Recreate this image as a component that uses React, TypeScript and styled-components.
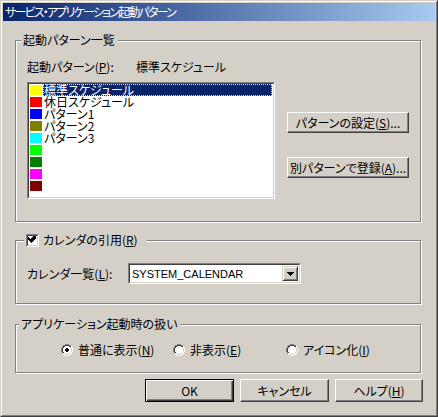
import React from 'react';
import styled, { createGlobalStyle } from 'styled-components';

const GlobalStyle = createGlobalStyle`
  html, body {
    margin: 0;
    padding: 0;
    background: #d4d0c8;
  }
  body {
    font-family: "Noto Sans CJK JP", "Noto Sans", sans-serif;
    font-size: 12px;
    font-feature-settings: "palt";
    color: #000;
  }
`;

const Frame = styled.div`
  width: 438px;
  height: 417px;
  box-sizing: border-box;
  border: 1px solid;
  border-color: #d4d0c8 #404040 #404040 #d4d0c8;
`;

const FrameInner = styled.div`
  height: 100%;
  box-sizing: border-box;
  border: 1px solid;
  border-color: #fff #808080 #808080 #fff;
  padding: 1px;
  display: flex;
  flex-direction: column;
`;

const TitleBar = styled.div`
  height: 18px;
  display: flex;
  align-items: center;
  padding-left: 2px;
  background: linear-gradient(to right, #0a246a, #a6caf0);
  color: #fff;
  line-height: 14px;
  letter-spacing: -1.8px;
`;

const Body = styled.div`
  flex: 1;
  display: flex;
  flex-direction: column;
  padding: 0 12px;
`;

const Group = styled.div<{ $top: number; $height: number }>`
  position: relative;
  margin-top: ${({ $top }) => $top}px;
  margin-right: 2px;
  height: ${({ $height }) => $height}px;
  box-sizing: border-box;
  border: 1px solid #808080;
  box-shadow: inset 1px 1px 0 #fff, 1px 1px 0 #fff;
`;

const Legend = styled.div<{ $left: number; $padRight?: number }>`
  position: absolute;
  top: -8px;
  left: ${({ $left }) => $left}px;
  padding: 0 ${({ $padRight }) => $padRight ?? 3}px 0 2px;
  background: #d4d0c8;
  line-height: 14px;
  display: flex;
  align-items: center;
  gap: 4px;
`;

const LabelRow = styled.div`
  display: flex;
  padding: 19px 0 0 11px;
  line-height: 14px;
  height: 14px;
`;

const LabelName = styled.span`
  width: 109px;
`;

const ListArea = styled.div`
  display: flex;
  padding: 8px 0 0 11px;
  gap: 12px;
`;

const Sunken = styled.div`
  border: 1px solid;
  border-color: #808080 #fff #fff #808080;
  box-sizing: border-box;
`;

const SunkenInner = styled.div`
  border: 1px solid;
  border-color: #404040 #d4d0c8 #d4d0c8 #404040;
  height: 100%;
  box-sizing: border-box;
  background: #fff;
`;

const ListBox = styled(Sunken)`
  width: 248px;
  height: 117px;
`;

const ListItem = styled.div`
  display: flex;
  align-items: center;
  height: 12px;
  padding-left: 1px;
`;

const Swatch = styled.span<{ $color: string }>`
  width: 12px;
  height: 10px;
  margin-right: 1px;
  background: ${({ $color }) => $color};
  flex: none;
`;

const ItemText = styled.span<{ $selected?: boolean }>`
  flex: 1;
  height: 12px;
  line-height: 12px;
  padding-left: 1px;
  margin-right: 1px;
  box-sizing: border-box;
  white-space: nowrap;
  color: ${({ $selected }) => ($selected ? '#fff' : '#000')};
  background: ${({ $selected }) => ($selected ? '#0a246a' : 'transparent')};
  outline: ${({ $selected }) => ($selected ? '1px dotted #f0e8a0' : 'none')};
  outline-offset: -1px;
`;

const SideButtons = styled.div`
  display: flex;
  flex-direction: column;
  gap: 24px;
  padding-top: 30px;
`;

const Button = styled.button<{ $width: number; $height: number; $default?: boolean }>`
  width: ${({ $width }) => $width}px;
  height: ${({ $height }) => $height}px;
  padding: 0;
  margin: 0;
  font: inherit;
  font-feature-settings: "palt";
  line-height: 14px;
  color: #000;
  background: #d4d0c8;
  border: 1px solid;
  border-color: ${({ $default }) => ($default ? '#000' : '#fff #404040 #404040 #fff')};
  box-shadow: ${({ $default }) =>
    $default
      ? 'inset 1px 1px 0 #fff, inset -1px -1px 0 #404040, inset -2px -2px 0 #808080'
      : 'inset -1px -1px 0 #808080'};
  display: flex;
  align-items: center;
  justify-content: center;
`;

const Check = styled.span`
  width: 13px;
  height: 13px;
  box-sizing: border-box;
  border: 1px solid;
  border-color: #808080 #fff #fff #808080;
  display: inline-block;
`;

const CheckInner = styled.span`
  display: block;
  width: 100%;
  height: 100%;
  box-sizing: border-box;
  border: 1px solid;
  border-color: #404040 #d4d0c8 #d4d0c8 #404040;
  background: #fff;
`;

const ComboRow = styled.div`
  display: flex;
  align-items: center;
  padding: 22px 0 0 11px;
`;

const ComboLabel = styled.span`
  width: 101px;
  line-height: 14px;
`;

const Combo = styled(Sunken)`
  width: 173px;
  height: 21px;
`;

const ComboInner = styled(SunkenInner)`
  display: flex;
  align-items: center;
  justify-content: space-between;
  padding: 1px;
`;

const ComboText = styled.span`
  font-family: "Liberation Sans", Arial, sans-serif;
  font-size: 11px;
  padding-left: 1px;
  line-height: 14px;
`;

const ArrowButton = styled.span`
  width: 16px;
  height: 15px;
  box-sizing: border-box;
  border: 1px solid;
  border-color: #d4d0c8 #404040 #404040 #d4d0c8;
  box-shadow: inset 1px 1px 0 #fff, inset -1px -1px 0 #808080;
  background: #d4d0c8;
  display: flex;
  align-items: center;
  justify-content: center;
`;

const RadioRow = styled.div`
  display: grid;
  grid-template-columns: 112px 113px auto;
  padding: 18px 0 0 45px;
`;

const RadioItem = styled.label`
  display: flex;
  align-items: center;
  gap: 5px;
  line-height: 14px;
`;

const Radio = styled.span`
  width: 12px;
  height: 12px;
  flex: none;
`;

const ButtonRow = styled.div`
  display: flex;
  justify-content: flex-end;
  gap: 6px;
  margin-top: 6px;
`;

const Mn: React.FC<React.PropsWithChildren> = ({ children }) => <u>{children}</u>;

const RadioIcon: React.FC<{ checked?: boolean }> = ({ checked }) => (
  <Radio>
    <svg width="12" height="12" viewBox="0 0 12 12" shapeRendering="crispEdges">
      <path d="M4 0h4v1h2v1h1v2h1v4h-1v2h-1v1h-2v1h-4v-1h-2v-1h-1v-2h-1v-4h1v-2h1v-1h2z" fill="#fff" />
      <path d="M4 0h4v1h-4zM2 1h2v1h-2zM8 1h2v1h-2zM1 2h1v2h-1zM0 4h1v4h-1zM1 8h1v2h-1z" fill="#808080" />
      <path d="M4 1h4v1h-4zM2 2h2v1h-2zM8 2h2v1h-2zM2 3h1v1h-1zM1 4h1v4h-1zM2 8h1v1h-1z" fill="#404040" />
      <path d="M10 2h1v2h-1zM11 4h1v4h-1zM10 8h1v2h-1zM8 10h2v1h-2zM2 10h2v1h-2zM4 11h4v1h-4z" fill="#fff" />
      <path d="M9 3h1v1h-1zM10 4h1v4h-1zM9 8h1v1h-1zM8 9h1v1h-1zM3 9h1v1h-1zM4 10h4v1h-4z" fill="#d4d0c8" />
      {checked && <path d="M5 4h2v1h1v2h-1v1h-2v-1h-1v-2h1z" fill="#000" />}
    </svg>
  </Radio>
);

const patterns: { color: string; name: string }[] = [
  { color: '#ffff00', name: '標準スケジュール' },
  { color: '#ff0000', name: '休日スケジュール' },
  { color: '#0000ff', name: 'パターン1' },
  { color: '#808000', name: 'パターン2' },
  { color: '#00ffff', name: 'パターン3' },
  { color: '#00ff00', name: '' },
  { color: '#008000', name: '' },
  { color: '#ff00ff', name: '' },
  { color: '#800000', name: '' },
];

export default function App() {
  return (
    <>
      <GlobalStyle />
      <Frame>
        <FrameInner>
          <TitleBar>サービス・アプリケーション起動パターン</TitleBar>
          <Body>
            <Group $top={19} $height={182}>
              <Legend $left={5}>起動パターン一覧</Legend>
              <LabelRow>
                <LabelName>
                  起動パターン(<Mn>P</Mn>):
                </LabelName>
                <span>標準スケジュール</span>
              </LabelRow>
              <ListArea>
                <ListBox>
                  <SunkenInner>
                    {patterns.map((p, i) => (
                      <ListItem key={i}>
                        <Swatch $color={p.color} />
                        {p.name ? <ItemText $selected={i === 0}>{p.name}</ItemText> : null}
                      </ListItem>
                    ))}
                  </SunkenInner>
                </ListBox>
                <SideButtons>
                  <Button $width={122} $height={21}>
                    パターンの設定(<Mn>S</Mn>)...
                  </Button>
                  <Button $width={122} $height={21}>
                    別パターンで登録(<Mn>A</Mn>)...
                  </Button>
                </SideButtons>
              </ListArea>
            </Group>

            <Group $top={18} $height={64}>
              <Legend $left={8} $padRight={9}>
                <Check>
                  <CheckInner>
                    <svg width="9" height="9" viewBox="0 0 9 9" shapeRendering="crispEdges" style={{ display: 'block' }}>
                      <path d="M7 1h1v3h-1v1h-1v1h-1v1h-1v1h-1v-1h-1v-1h-1v-1h-1v-3h1v1h1v1h1v-1h1v-1h1v-1h1z" fill="#000" transform="translate(0,-1)" />
                    </svg>
                  </CheckInner>
                </Check>
                <span>
                  カレンダの引用(<Mn>R</Mn>)
                </span>
              </Legend>
              <ComboRow>
                <ComboLabel>
                  カレンダ一覧(<Mn>L</Mn>):
                </ComboLabel>
                <Combo>
                  <ComboInner>
                    <ComboText>SYSTEM_CALENDAR</ComboText>
                    <ArrowButton>
                      <svg width="7" height="4" viewBox="0 0 7 4" shapeRendering="crispEdges">
                        <path d="M0 0h7v1h-1v1h-1v1h-1v1h-1v-1h-1v-1h-1v-1h-1z" fill="#000" />
                      </svg>
                    </ArrowButton>
                  </ComboInner>
                </Combo>
              </ComboRow>
            </Group>

            <Group $top={20} $height={49}>
              <Legend $left={3}>アプリケーション起動時の扱い</Legend>
              <RadioRow>
                <RadioItem>
                  <RadioIcon checked />
                  <span>
                    普通に表示(<Mn>N</Mn>)
                  </span>
                </RadioItem>
                <RadioItem>
                  <RadioIcon />
                  <span>
                    非表示(<Mn>E</Mn>)
                  </span>
                </RadioItem>
                <RadioItem>
                  <RadioIcon />
                  <span>
                    アイコン化(<Mn>I</Mn>)
                  </span>
                </RadioItem>
              </RadioRow>
            </Group>

            <ButtonRow>
              <Button $width={89} $height={23} $default>
                OK
              </Button>
              <Button $width={89} $height={23}>
                キャンセル
              </Button>
              <Button $width={88} $height={23}>
                ヘルプ(<Mn>H</Mn>)
              </Button>
            </ButtonRow>
          </Body>
        </FrameInner>
      </Frame>
    </>
  );
}
